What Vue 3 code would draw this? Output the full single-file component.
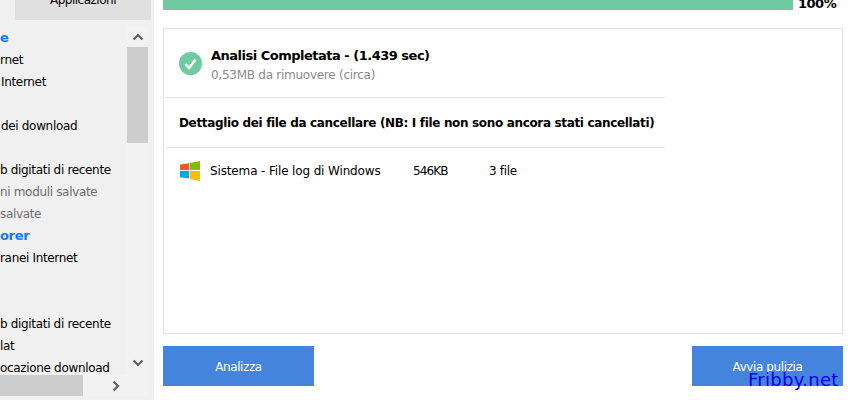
<script setup>
// left offset of each row follows the clipped tree in the sidebar
const rows = [
  { text: 'e', x: 0, kind: 'head' },
  { text: 'rnet', x: 0 },
  { text: 'Internet', x: 1 },
  { text: '', x: 0 },
  { text: 'dei download', x: 1 },
  { text: '', x: 0 },
  { text: 'b digitati di recente', x: 0 },
  { text: 'ni moduli salvate', x: 0, kind: 'off' },
  { text: 'salvate', x: 0, kind: 'off' },
  { text: 'orer', x: 0, kind: 'head' },
  { text: 'ranei Internet', x: 0 },
  { text: '', x: 0 },
  { text: '', x: 0 },
  { text: 'b digitati di recente', x: 0 },
  { text: 'lat', x: 0 },
  { text: 'ocazione download', x: 0 }
]
</script>

<template>
  <div class="app">
    <aside class="side">
      <div class="apps-tab">Applicazioni</div>
      <div class="tree">
        <ul class="rows">
          <li
            v-for="(row, i) in rows"
            :key="i"
            class="row"
            :class="row.kind"
            :style="{ paddingLeft: row.x + 'px' }"
          >{{ row.text }}</li>
        </ul>
        <div class="vbar">
          <svg class="arrow up" width="12" height="8" viewBox="0 0 12 8"><path d="M1.500 6.500 6 2l4.500 4.500" /></svg>
          <div class="vthumb"></div>
          <div class="vspace"></div>
          <svg class="arrow down" width="12" height="8" viewBox="0 0 12 8"><path d="M1.500 1.500 6 6l4.500-4.500" /></svg>
        </div>
      </div>
      <div class="hbar">
        <div class="hthumb"></div>
        <svg class="arrow" width="8" height="12" viewBox="0 0 8 12"><path d="M1.500 1.500 6 6l-4.500 4.500" /></svg>
      </div>
    </aside>

    <main class="main">
      <div class="progress">
        <div class="track"><div class="fill"></div></div>
        <span class="pct">100%</span>
      </div>

      <section class="panel">
        <div class="inner">
          <div class="summary">
            <svg class="ok" width="23" height="23" viewBox="0 0 23 23">
              <circle cx="11.500" cy="11.500" r="11.500" fill="#6fcb9f" />
              <path d="M6.500 12l3.500 4 6.500-8.500" fill="none" stroke="#fff" stroke-width="2.600" />
            </svg>
            <div>
              <div class="title">Analisi Completata - (1.439 sec)</div>
              <div class="sub">0,53MB da rimuovere (circa)</div>
            </div>
          </div>
          <div class="detail">Dettaglio dei file da cancellare (NB: I file non sono ancora stati cancellati)</div>
          <div class="file">
            <svg class="win" width="20" height="20" viewBox="0 0 20 20">
              <path d="M0 3.500 9 2.200V9H0z" fill="#f35325" />
              <path d="M10 2 20 0v9H10z" fill="#81bc06" />
              <path d="M0 10h9v7.500L0 16.200z" fill="#05a6f0" />
              <path d="M10 10h10v10l-10-2z" fill="#ffba08" />
            </svg>
            <span class="fname">Sistema - File log di Windows</span>
            <span class="fsize">546KB</span>
            <span class="fcount">3 file</span>
          </div>
        </div>
      </section>

      <div class="actions">
        <button class="btn">Analizza</button>
        <button class="btn">Avvia pulizia</button>
      </div>
    </main>

    <span class="mark">Fribby.net</span>
  </div>
</template>

<style>
html, body {
  margin: 0;
  background: #fff;
  overflow: hidden;
}
</style>

<style scoped>
.app {
  width: 850px;
  height: 400px;
  display: flex;
  position: relative;
  overflow: hidden;
  font-family: "DejaVu Sans", sans-serif;
  font-size: 12px;
  color: #000;
}

.side {
  width: 154px;
  height: 400px;
  background: #f0f0f0;
  flex: none;
  display: flex;
  flex-direction: column;
}
.apps-tab {
  margin: -20px 3px 0 15px;
  height: 40px;
  background: #e0e0e0;
  text-align: center;
  line-height: 40px;
  letter-spacing: -0.5px;
  flex: none;
}
.tree {
  display: flex;
  height: 349px;
  margin-top: 6px;
  flex: none;
}
.rows {
  list-style: none;
  margin: 0;
  padding: 1px 0 0;
  width: 127px;
  overflow: hidden;
  white-space: nowrap;
  letter-spacing: -0.33px;
  flex: none;
}
.row {
  height: 22px;
  line-height: 22px;
}
.row.head {
  color: #1a75f5;
  font-weight: bold;
  font-size: 13px;
}
.row.off {
  color: #6d6d6d;
}
.vbar {
  width: 21px;
  background: #f2f2f2;
  display: flex;
  flex-direction: column;
  align-items: center;
}
.vbar .arrow {
  flex: none;
}
.vbar .up {
  margin: 7px 0 6px;
}
.vbar .down {
  margin: 4px 0 8px;
}
.vthumb {
  width: 100%;
  height: 96px;
  background: #cdcdcd;
  flex: none;
}
.vspace {
  flex: 1;
}
.hbar {
  height: 21px;
  width: 148px;
  background: #f2f2f2;
  display: flex;
  align-items: center;
  flex: none;
}
.hthumb {
  width: 83px;
  height: 100%;
  background: #cdcdcd;
}
.hbar .arrow {
  margin-left: 29px;
}
.arrow path {
  fill: none;
  stroke: #5f5f5f;
  stroke-width: 2.200;
}

.main {
  flex: 1;
  padding-left: 9px;
  padding-right: 7px;
  display: flex;
  flex-direction: column;
}
.progress {
  display: flex;
  height: 10px;
}
.track {
  width: 630px;
}
.fill {
  height: 10px;
  background: #6fcb9f;
}
.pct {
  margin-left: 5px;
  margin-top: -5px;
  font-size: 13px;
  font-weight: bold;
  line-height: 18px;
  letter-spacing: -0.5px;
}
.panel {
  margin-top: 18px;
  height: 306px;
  box-sizing: border-box;
  border: 1px solid #e3e3e3;
  padding-left: 2px;
}
.inner {
  width: 499px;
}
.summary {
  height: 69px;
  box-sizing: border-box;
  padding: 17px 0 0 13px;
  display: flex;
  gap: 9px;
  border-bottom: 1px solid #e3e3e3;
}
.ok {
  margin-top: 6px;
}
.title {
  font-size: 13px;
  font-weight: bold;
  line-height: 20px;
  letter-spacing: -0.5px;
}
.sub {
  color: #8a8a8a;
  line-height: 18px;
  letter-spacing: -0.26px;
}
.detail {
  height: 50px;
  box-sizing: border-box;
  border-bottom: 1px solid #e3e3e3;
  padding-left: 13px;
  font-weight: bold;
  line-height: 51px;
  letter-spacing: -0.34px;
  white-space: nowrap;
}
.file {
  display: flex;
  align-items: center;
  height: 46px;
  padding-left: 14px;
}
.win {
  flex: none;
}
.fname {
  margin-left: 10px;
  width: 203px;
  white-space: nowrap;
  letter-spacing: -0.14px;
}
.fsize {
  width: 76px;
  letter-spacing: -0.9px;
}
.fcount {
  letter-spacing: -0.3px;
}
.actions {
  margin-top: 12px;
  display: flex;
  justify-content: space-between;
}
.btn {
  width: 151px;
  height: 40px;
  border: 0;
  padding: 2px 0 0;
  background: #4484dd;
  color: #fff;
  font: inherit;
  letter-spacing: -0.4px;
}
.mark {
  position: absolute;
  left: 748px;
  top: 369px;
  font-size: 18px;
  line-height: 22px;
  letter-spacing: 0.3px;
  color: #0000ee;
}
</style>
